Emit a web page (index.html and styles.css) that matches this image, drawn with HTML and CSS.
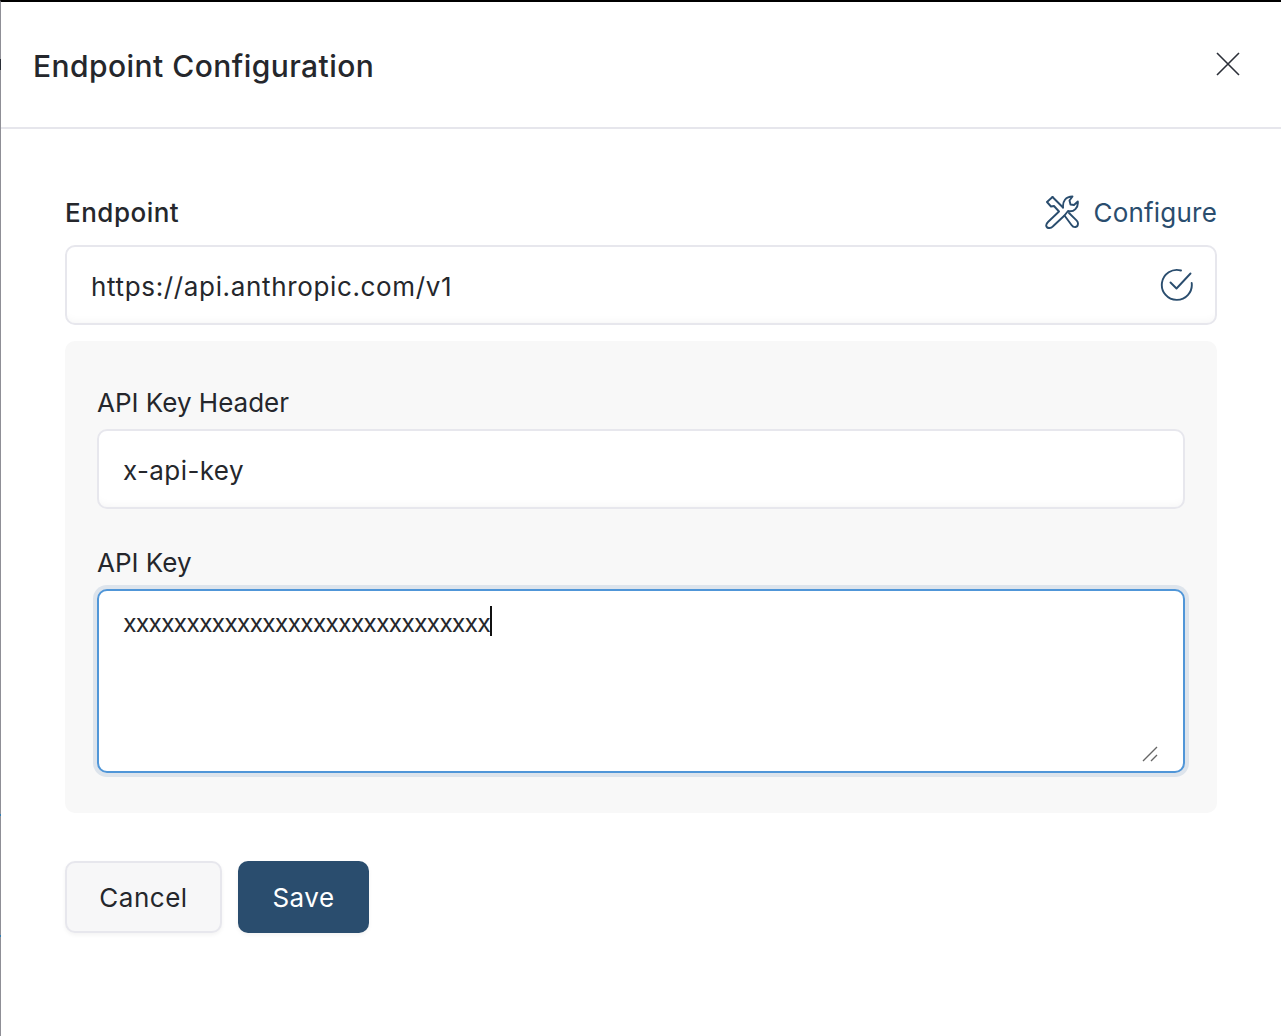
FILE: index.html
```html
<!DOCTYPE html>
<html lang="en">
<head>
<meta charset="utf-8">
<title>Endpoint Configuration</title>
<link rel="stylesheet" href="styles.css">
</head>
<body>
<span class="edge-mark edge-dark"></span>
<span class="edge-mark edge-blue-a"></span>
<span class="edge-mark edge-blue-b"></span>
<div class="dialog">
  <header class="header">
    <h1 class="title">Endpoint Configuration</h1>
    <svg class="close" width="24" height="24" viewBox="0 0 24 24" fill="none" stroke="#2b2f38" stroke-width="1.6"><path d="M1 1 L23 23 M23 1 L1 23"/></svg>
  </header>
  <main class="content">
    <div class="label-row">
      <span class="label-strong">Endpoint</span>
      <span class="configure">
        <svg width="34" height="34" viewBox="0 0 34 34" fill="none" stroke="#2a4d6e" stroke-width="1.9" stroke-linejoin="round" stroke-linecap="round"><path d="M7.5 2 L2 7 L6 11.5 L9 11 L14 16.5 L3 27 C0 30 1 33 4.5 33 C6 33 7 32.3 8 31.3 L19.5 20.5 L26.5 30 C28.5 33 33 33 33 28.5 C33 27.3 32.5 26.3 31.5 25.3 L24 18"/><path d="M7.5 2 L18 12.5"/><path d="M18 12.5 C17.5 6.5 20.5 1.5 27.5 1.5 L24.5 5.5 L25.5 9.5 L29 10 L32.8 6.5 C33.5 12.5 29 17.5 23 16 L19.5 20.5"/></svg>
        Configure
      </span>
    </div>
    <div class="field">
      <span class="field-text">https://api.anthropic.com/v1</span>
      <svg width="34" height="34" viewBox="0 0 34 34" fill="none" stroke="#2a4d6e" stroke-width="1.9" stroke-linecap="round" stroke-linejoin="round"><path d="M31.7 15 A15 15 0 1 1 21 2.5"/><path d="M10.5 14.5 L16.5 20.5 L30.5 5.5"/></svg>
    </div>
    <section class="panel">
      <label class="label">API Key Header</label>
      <div class="field field-inner"><span class="field-text-short">x-api-key</span></div>
      <label class="label">API Key</label>
      <div class="textarea"><span class="typed">xxxxxxxxxxxxxxxxxxxxxxxxxxxxx</span><span class="caret"></span>
        <svg class="grip" width="16" height="16" viewBox="0 0 16 16" fill="none" stroke="#666" stroke-width="1.4"><path d="M1 15 L15 1 M9 15 L15 9"/></svg>
      </div>
    </section>
    <div class="actions">
      <button class="btn btn-cancel">Cancel</button>
      <button class="btn btn-save">Save</button>
    </div>
  </main>
</div>
</body>
</html>
```
FILE: styles.css
```css
html, body { margin: 0; padding: 0; background: #fff; }
body { position: relative; font-family: Inter, "Open Sans", sans-serif; color: #25272c; height: 1036px; overflow: hidden; }
.edge-mark { position: absolute; left: 0; width: 1px; }
.edge-dark { top: 59px; height: 11px; background: #2b2f38; }
.edge-blue-a { top: 814px; height: 2px; background: #2f7fb5; }
.edge-blue-b { top: 935px; height: 2px; background: #2f7fb5; }
.dialog { border-top: 2px solid #000; border-left: 1px solid #8f8f96; height: 1036px; box-sizing: border-box; }
.header { height: 127px; box-sizing: border-box; border-bottom: 2px solid #e6e6ec; display: flex; align-items: center; justify-content: space-between; padding: 3px 41px 0 32px; }
.title { margin: 0; font-size: 30px; font-weight: 500; letter-spacing: 0.45px; line-height: 40px; }
.close { display: block; margin-bottom: 5px; }
.content { padding: 63px 64px 0 64px; }
.label-row { display: flex; justify-content: space-between; align-items: center; height: 40px; margin-bottom: 13px; }
.label-strong { font-size: 26px; font-weight: 500; letter-spacing: 0.5px; }
.configure { display: flex; align-items: center; gap: 15px; color: #2a4d6e; font-size: 26px; letter-spacing: 0.2px; }
.field { height: 80px; box-sizing: border-box; border: 2px solid #e7e7ed; border-radius: 10px; background: #fff; box-shadow: inset 0 -8px 12px -10px #eee; display: flex; align-items: center; justify-content: space-between; padding: 0 21px 0 24px; font-size: 26px; margin-bottom: 16px; }
.field-text { letter-spacing: 0.65px; padding-top: 2px; }
.field-text-short { letter-spacing: 0.4px; padding-top: 2px; }
.panel { background: #f8f8f8; border-radius: 10px; padding: 44px 32px 40px; height: 472px; box-sizing: border-box; }
.label { display: block; font-size: 26px; line-height: 36px; margin-bottom: 8px; }
.field-inner { margin-bottom: 36px; }
.textarea { position: relative; height: 184px; box-sizing: border-box; border: 2px solid #5096d8; border-radius: 10px; background: #fff; box-shadow: 0 0 0 4px #dde4ec; padding: 15px 24px; font-size: 25px; line-height: 34px; display: flex; align-items: flex-start; }
.typed { letter-spacing: -1px; }
.caret { display: inline-block; width: 2px; height: 30px; background: #111; }
.grip { position: absolute; right: 25px; bottom: 9px; }
.actions { display: flex; gap: 16px; margin-top: 48px; }
.btn { height: 72px; border-radius: 10px; font-family: inherit; font-size: 26px; letter-spacing: 0.5px; box-sizing: border-box; box-shadow: 0 2px 4px rgba(0,0,0,0.05); }
.btn-cancel { width: 157px; background: #f7f7f8; border: 2px solid #e7e7ed; color: #25272c; }
.btn-save { width: 131px; background: #2a4d6e; border: 0; color: #fff; }
```
